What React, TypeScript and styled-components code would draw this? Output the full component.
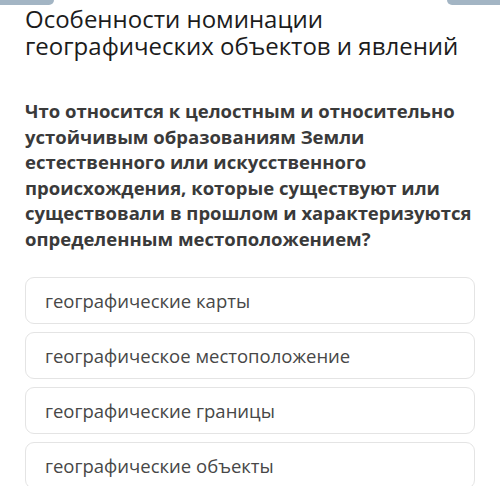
import * as React from "react";
import styled, { createGlobalStyle } from "styled-components";

const GlobalStyle = createGlobalStyle`
  html, body {
    margin: 0;
    padding: 0;
    background: #fff;
  }
  body {
    font-family: "Open Sans", "Noto Sans", sans-serif;
    -webkit-font-smoothing: antialiased;
  }
`;

const Page = styled.div`
  width: 500px;
  height: 486px;
  overflow: hidden;
  background: #fff;
`;

const TopBar = styled.div`
  display: flex;
  justify-content: space-between;
  height: 5px;
`;

const Tab = styled.div<{ $side: "left" | "right" }>`
  width: ${(p) => (p.$side === "left" ? 54 : 53)}px;
  height: 5px;
  background: #a3b5c4;
  border-radius: ${(p) => (p.$side === "left" ? "0 0 8px 0" : "0 0 0 8px")};
`;

const Content = styled.div`
  padding: 0 25px;
`;

const Title = styled.h1`
  margin: 0;
  font-size: 24px;
  font-weight: 400;
  line-height: 27px;
  color: #1c1c1c;
`;

const Question = styled.p`
  margin: 39px 0 0;
  font-size: 18.5px;
  font-weight: 700;
  line-height: 25.5px;
  color: #3a3a3a;
  white-space: nowrap;
`;

const Line = styled.span`
  display: block;
`;

const Options = styled.ul`
  list-style: none;
  margin: 26px 0 0;
  padding: 0;
  display: flex;
  flex-direction: column;
  gap: 8px;
`;

const Option = styled.li`
  height: 45px;
  display: flex;
  align-items: center;
  padding: 0 19px;
  border: 1px solid #e4e4e4;
  border-radius: 9px;
  font-size: 18.5px;
  color: #474747;
`;

const questionLines = [
  "Что относится к целостным и относительно",
  "устойчивым образованиям Земли",
  "естественного или искусственного",
  "происхождения, которые существуют или",
  "существовали в прошлом и характеризуются",
  "определенным местоположением?",
];

const answers = [
  "географические карты",
  "географическое местоположение",
  "географические границы",
  "географические объекты",
];

export default function App() {
  return (
    <Page>
      <GlobalStyle />
      <TopBar>
        <Tab $side="left" />
        <Tab $side="right" />
      </TopBar>
      <Content>
        <Title>
          <Line>Особенности номинации</Line>
          <Line>географических объектов и явлений</Line>
        </Title>
        <Question>
          {questionLines.map((l) => (
            <Line key={l}>{l}</Line>
          ))}
        </Question>
        <Options>
          {answers.map((a) => (
            <Option key={a}>{a}</Option>
          ))}
        </Options>
      </Content>
    </Page>
  );
}
